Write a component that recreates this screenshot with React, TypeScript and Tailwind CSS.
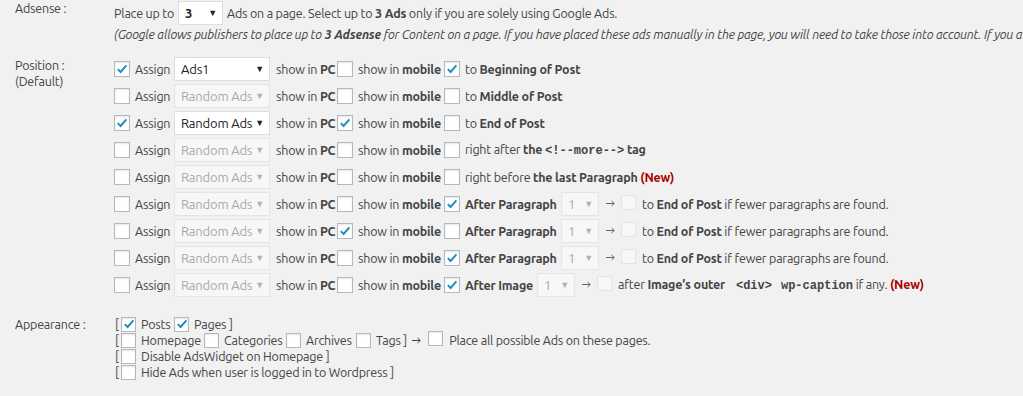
import React from "react";

type Box = { checked?: boolean; disabled?: boolean; small?: boolean };

function CheckBox({ checked, disabled, small }: Box) {
  const size = small ? "w-[15px] h-[15px]" : "w-[16px] h-[16px]";
  return (
    <span
      className={`inline-flex items-center justify-center shrink-0 border ${size} ${
        disabled
          ? "bg-[#f7f7f7] border-[#e2e4e7]"
          : "bg-white border-[#b4b9be] shadow-[inset_0_1px_2px_rgba(0,0,0,0.1)]"
      }`}
    >
      {checked && (
        <svg width="12" height="12" viewBox="0 0 12 12">
          <path d="M1.8 6.2 L4.6 9 L10.4 2.4" fill="none" stroke="#1e8cbe" strokeWidth="1.9" />
        </svg>
      )}
    </span>
  );
}

function Select({ value, width, disabled, bold }: { value: string; width: string; disabled?: boolean; bold?: boolean }) {
  return (
    <span
      className={`inline-flex items-center justify-between h-[24px] border pl-[6px] pr-[5px] shrink-0 text-[13px] ${width} ${
        disabled ? "bg-[#f7f7f7] border-[#e5e5e5] text-[#a7aaad]" : "bg-white border-[#dddddd] text-[#222]"
      } ${bold ? "font-bold" : ""}`}
    >
      <span>{value}</span>
      <span className={`text-[9px] ${disabled ? "text-[#b0b3b6]" : "text-[#222]"}`}>▼</span>
    </span>
  );
}

// small arrow, drawn so its width is predictable
function Arrow({ color = "#666" }: { color?: string }) {
  return (
    <svg width="9" height="7" viewBox="0 0 9 7" className="shrink-0">
      <path d="M0 3.5 H8 M5.5 1 L8.3 3.5 L5.5 6" fill="none" stroke={color} strokeWidth="1" />
    </svg>
  );
}

type Row = {
  assign?: boolean;
  ad: string;
  enabled?: boolean;
  pc?: boolean;
  mobile?: boolean;
  tail: React.ReactNode;
};

const Mono = ({ children }: { children: React.ReactNode }) => (
  <span className="font-['Liberation_Mono','DejaVu_Sans_Mono',monospace] font-bold text-[12px] tracking-normal">{children}</span>
);

const New = () => <span className="font-bold text-[#a00]">(New)</span>;

function AfterPara({ label, labelW, gapText }: { label: string; labelW: string; gapText: React.ReactNode }) {
  return (
    <span className="flex items-center">
      <b className={labelW}>{label}</b>
      <Select value="1" width="w-[38px]" disabled />
      <span className="ml-[7px] flex">
        <Arrow />
      </span>
      <span className="ml-[6px]">
        <CheckBox disabled small />
      </span>
      <span className="ml-[6px]">{gapText}</span>
    </span>
  );
}

const fewer = (
  <span>
    to <b>End of Post</b> if fewer paragraphs are found.
  </span>
);

const rows: Row[] = [
  { assign: true, ad: "Ads1", enabled: true, mobile: true, tail: <span>to <b>Beginning of Post</b></span> },
  { ad: "Random Ads", tail: <span>to <b>Middle of Post</b></span> },
  { assign: true, ad: "Random Ads", enabled: true, pc: true, tail: <span>to <b>End of Post</b></span> },
  { ad: "Random Ads", tail: <span>right after <b>the</b> <Mono>&lt;!--more--&gt;</Mono> <b>tag</b></span> },
  { ad: "Random Ads", tail: <span>right before <b>the last Paragraph</b> <New /></span> },
  { ad: "Random Ads", mobile: true, tail: <AfterPara label="After Paragraph" labelW="w-[96px]" gapText={fewer} /> },
  { ad: "Random Ads", pc: true, tail: <AfterPara label="After Paragraph" labelW="w-[96px]" gapText={fewer} /> },
  { ad: "Random Ads", mobile: true, tail: <AfterPara label="After Paragraph" labelW="w-[96px]" gapText={fewer} /> },
  {
    ad: "Random Ads",
    mobile: true,
    tail: (
      <AfterPara
        label="After Image"
        labelW="w-[72px]"
        gapText={
          <span>
            after <b>Image's outer</b>
            <span className="ml-[11px]">
              <Mono>&lt;div&gt;</Mono>
            </span>
            <span className="ml-[9px]">
              <Mono>wp-caption</Mono>
            </span>{" "}
            if any. <New />
          </span>
        }
      />
    ),
  },
];

export default function App() {
  return (
    <div className="w-[1023px] h-[396px] overflow-hidden bg-[#f1f1f1] text-[#444] text-[12.5px] tracking-[-0.2px] font-['Ubuntu','Lato','Liberation_Sans',sans-serif] leading-[16px] whitespace-nowrap">
      {/* Adsense */}
      <div className="flex">
        <div className="w-[114px] pl-[15px] shrink-0">Adsense :</div>
        <div className="flex-1 min-w-0 overflow-hidden">
          <div className="flex items-center h-[25px]">
            <span className="w-[64px]">Place up to</span>
            <Select value="3" width="w-[45px]" bold />
            <span className="ml-[4px]">
              Ads on a page. Select up to <b>3 Ads</b> only if you are solely using Google Ads.
            </span>
          </div>
          <div className="italic h-[16px] mt-[1px]">
            (Google allows publishers to place up to <b>3 Adsense</b> for Content on a page. If you have placed these ads manually in the page, you will need to take those into account. If you a
          </div>
        </div>
      </div>

      {/* Position */}
      <div className="flex mt-[13px]">
        <div className="w-[114px] pl-[15px] shrink-0 pt-[2px]">
          <div>Position :</div>
          <div>(Default)</div>
        </div>
        <div className="flex flex-col">
          {rows.map((r, i) => (
            <div key={i} className="flex items-center h-[27px]">
              <CheckBox checked={r.assign} />
              <span className="ml-[5px] w-[39px]">Assign</span>
              <Select value={r.ad} width="w-[96px]" disabled={!r.enabled} />
              <span className="ml-[6px] w-[61px]">
                show in <b>PC</b>
              </span>
              <CheckBox checked={r.pc} />
              <span className="ml-[5px] w-[86px]">
                show in <b>mobile</b>
              </span>
              <CheckBox checked={r.mobile} />
              <span className="ml-[5px]">{r.tail}</span>
            </div>
          ))}
        </div>
      </div>

      {/* Appearance */}
      <div className="flex mt-[18px]">
        <div className="w-[114px] pl-[15px] shrink-0">Appearance :</div>
        <div className="flex flex-col">
          <div className="flex items-center h-[16px]">
            <span className="w-[7px] pl-[1px]">[</span>
            <CheckBox checked small />
            <span className="ml-[5px] w-[33px]">Posts</span>
            <CheckBox checked small />
            <span className="ml-[5px]">Pages ]</span>
          </div>
          <div className="flex items-center h-[16px]">
            <span className="w-[7px] pl-[1px]">[</span>
            <CheckBox small />
            <span className="ml-[5px] w-[63px]">Homepage</span>
            <CheckBox small />
            <span className="ml-[5px] w-[62px]">Categories</span>
            <CheckBox small />
            <span className="ml-[5px] w-[50px]">Archives</span>
            <CheckBox small />
            <span className="ml-[5px]">Tags ]</span>
            <span className="ml-[5px] flex">
              <Arrow color="#444" />
            </span>
            <span className="ml-[7px]">
              <CheckBox small />
            </span>
            <span className="ml-[6px]">Place all possible Ads on these pages.</span>
          </div>
          <div className="flex items-center h-[16px]">
            <span className="w-[7px] pl-[1px]">[</span>
            <CheckBox small />
            <span className="ml-[5px]">Disable AdsWidget on Homepage ]</span>
          </div>
          <div className="flex items-center h-[16px]">
            <span className="w-[7px] pl-[1px]">[</span>
            <CheckBox small />
            <span className="ml-[5px]">Hide Ads when user is logged in to Wordpress ]</span>
          </div>
        </div>
      </div>
    </div>
  );
}
